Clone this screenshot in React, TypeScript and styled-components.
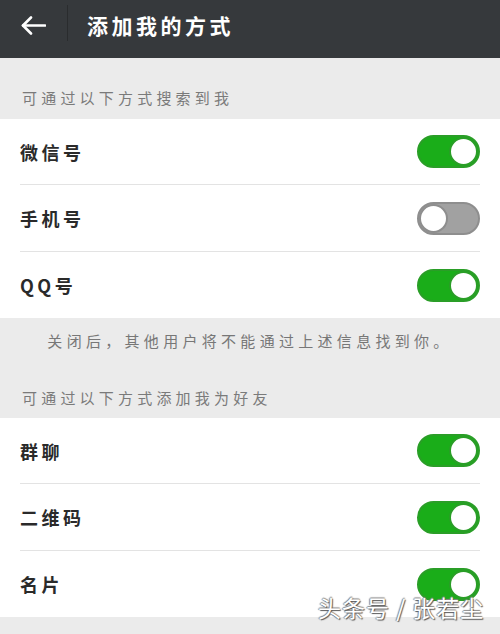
import React from "react";
import styled, { createGlobalStyle } from "styled-components";

const Global = createGlobalStyle`
  html, body { margin: 0; padding: 0; background: #ebebeb; }
  body { font-family: "Noto Sans CJK SC", "Noto Sans", sans-serif; }
`;

const Page = styled.div`
  position: relative;
  width: 500px;
  height: 634px;
  background: #ebebeb;
  overflow: hidden;
`;

const Header = styled.header`
  height: 58px;
  background: #36393c;
  display: flex;
  align-items: center;
`;

const BackButton = styled.div`
  width: 67px;
  height: 58px;
  display: flex;
  align-items: center;
  justify-content: center;
  padding-bottom: 8px;
  box-sizing: border-box;
`;

const HeaderDivider = styled.div`
  width: 1px;
  height: 36px;
  margin-bottom: 12px;
  background: #2a2c2e;
`;

const Title = styled.h1`
  margin: 0 0 8px 19px;
  font-size: 21px;
  font-weight: 700;
  letter-spacing: 3.5px;
  color: #ffffff;
  line-height: 24px;
`;

const SectionLabel = styled.div<{ $top: number; $height: number }>`
  height: ${(p) => p.$height}px;
  box-sizing: border-box;
  padding: ${(p) => p.$top}px 0 0 22px;
  font-size: 15px;
  line-height: 24px;
  letter-spacing: 4.2px;
  color: #7a7a7a;
`;

const Note = styled.div`
  height: 46px;
  box-sizing: border-box;
  padding-top: 11px;
  text-align: center;
  font-size: 15px;
  line-height: 24px;
  letter-spacing: 4.3px;
  color: #777;
`;

const Group = styled.section`
  background: #ffffff;
`;

const Row = styled.div<{ $h: number; $last?: boolean }>`
  height: ${(p) => p.$h}px;
  margin: 0 20px;
  box-sizing: border-box;
  display: flex;
  align-items: center;
  justify-content: space-between;
  border-bottom: ${(p) => (p.$last ? "none" : "1px solid #e3e3e3")};
`;

const RowLabel = styled.span`
  font-size: 18px;
  font-weight: 700;
  letter-spacing: 3.5px;
  color: #2a2a2a;
`;

const Track = styled.div<{ $on: boolean }>`
  position: relative;
  width: 63px;
  height: 33px;
  box-sizing: border-box;
  border-radius: 17px;
  background: ${(p) => (p.$on ? "#1aad19" : "#a1a1a1")};
  border: 2px solid ${(p) => (p.$on ? "#2a9e27" : "#8e8e8e")};
`;

const Thumb = styled.div<{ $on: boolean }>`
  position: absolute;
  top: 0;
  ${(p) => (p.$on ? "right: 0;" : "left: 0;")}
  width: 29px;
  height: 29px;
  box-sizing: border-box;
  border-radius: 50%;
  background: #ffffff;
  border: 2px solid ${(p) => (p.$on ? "#2a9e27" : "#8e8e8e")};
`;

const Footer = styled.div`
  height: 16px;
`;

const Watermark = styled.div`
  position: absolute;
  left: 318px;
  top: 593px;
  font-size: 23px;
  line-height: 28px;
  letter-spacing: 1px;
  color: #ffffff;
  text-shadow: 1px 1px 1px #555, -1px 0 1px #888, 0 -1px 1px #888;
  white-space: nowrap;
`;

const Toggle = ({ on }: { on: boolean }) => (
  <Track $on={on}>
    <Thumb $on={on} />
  </Track>
);

const BackArrow = () => (
  <svg width="25" height="19" viewBox="0 0 25 19" fill="none">
    <path d="M24 9.5H2" stroke="#fff" strokeWidth="2.6" strokeLinecap="round" />
    <path d="M10 1.5L2 9.5L10 17.5" stroke="#fff" strokeWidth="2.6" strokeLinecap="round" strokeLinejoin="round" />
  </svg>
);

type Item = { label: string; on: boolean };

const search: Item[] = [
  { label: "微信号", on: true },
  { label: "手机号", on: false },
  { label: "QQ号", on: true },
];

const add: Item[] = [
  { label: "群聊", on: true },
  { label: "二维码", on: true },
  { label: "名片", on: true },
];

const heights = [66, 67, 66];

const ItemGroup = ({ items }: { items: Item[] }) => (
  <Group>
    {items.map((it, i) => (
      <Row key={it.label} $h={heights[i]} $last={i === items.length - 1}>
        <RowLabel>{it.label}</RowLabel>
        <Toggle on={it.on} />
      </Row>
    ))}
  </Group>
);

export default function App() {
  return (
    <Page>
      <Global />
      <Header>
        <BackButton>
          <BackArrow />
        </BackButton>
        <HeaderDivider />
        <Title>添加我的方式</Title>
      </Header>
      <SectionLabel $top={28} $height={61}>可通过以下方式搜索到我</SectionLabel>
      <ItemGroup items={search} />
      <Note>关闭后，其他用户将不能通过上述信息找到你。</Note>
      <SectionLabel $top={22} $height={54}>可通过以下方式添加我为好友</SectionLabel>
      <ItemGroup items={add} />
      <Footer />
      <Watermark>头条号 / 张若尘</Watermark>
    </Page>
  );
}
